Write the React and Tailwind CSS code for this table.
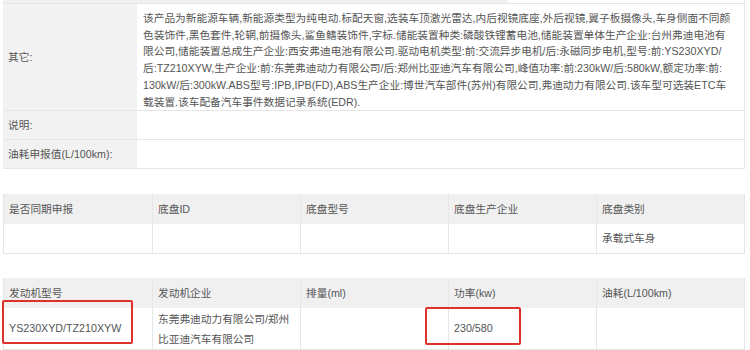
export default function App() {
  const lines = [
    "该产品为新能源车辆,新能源类型为纯电动.标配天窗,选装车顶激光雷达,内后视镜底座,外后视镜,翼子板摄像头,车身侧面不同颜",
    "色装饰件,黑色套件,轮辋,前摄像头,鲨鱼鳍装饰件,字标.储能装置种类:磷酸铁锂蓄电池,储能装置单体生产企业:台州弗迪电池有",
    "限公司,储能装置总成生产企业:西安弗迪电池有限公司.驱动电机类型:前:交流异步电机/后:永磁同步电机,型号:前:YS230XYD/",
    "后:TZ210XYW,生产企业:前:东莞弗迪动力有限公司/后:郑州比亚迪汽车有限公司,峰值功率:前:230kW/后:580kW,额定功率:前:",
    "130kW/后:300kW.ABS型号:IPB,IPB(FD),ABS生产企业:博世汽车部件(苏州)有限公司,弗迪动力有限公司.该车型可选装ETC车",
    "载装置.该车配备汽车事件数据记录系统(EDR).",
  ];
  const cell = "border-l border-[#e6e6e6] first:border-l-0 pl-[5px] flex items-center";
  return (
    <div className="w-[750px] h-[350px] bg-white relative overflow-hidden pl-[3px] text-[10.7px] text-[#555] font-['Liberation_Sans','Noto_Sans_CJK_SC',sans-serif]">
      {/* Table 1 */}
      <div className="w-[742px] border-r border-b border-[#e6e6e6]">
        <div className="flex h-[3px]">
          <div className="w-[134px] bg-[#f0f0f0]" />
          <div className="w-[371px] bg-[#f0f0f0]" />
        </div>
        <div className="flex h-[107px] border-t border-[#e6e6e6]">
          <div className="w-[134px] shrink-0 bg-[#f2f2f2] flex items-center pl-[5px]">其它:</div>
          <div className="flex-1 pl-[6px] pt-[6px] leading-[16.7px]">
            {lines.map((l, i) => (
              <div key={i} className="whitespace-nowrap">{l}</div>
            ))}
          </div>
        </div>
        <div className="flex h-[29px] border-t border-[#e6e6e6]">
          <div className="w-[134px] shrink-0 bg-[#f2f2f2] flex items-center pl-[5px]">说明:</div>
          <div className="flex-1" />
        </div>
        <div className="flex h-[29px] border-t border-[#e6e6e6]">
          <div className="w-[134px] shrink-0 bg-[#f2f2f2] flex items-center pl-[5px]">油耗申报值(L/100km):</div>
          <div className="flex-1" />
        </div>
      </div>

      {/* Table 2 */}
      <div className="mt-[25px] w-[742px] border border-t-0 border-[#e6e6e6]">
        <div className="grid grid-cols-5 h-[30px] bg-[#f0f0f0]">
          <div className={cell}>是否同期申报</div>
          <div className={cell}>底盘ID</div>
          <div className={cell}>底盘型号</div>
          <div className={cell}>底盘生产企业</div>
          <div className={cell}>底盘类别</div>
        </div>
        <div className="grid grid-cols-5 h-[29px]">
          <div className={cell}></div>
          <div className={cell}></div>
          <div className={cell}></div>
          <div className={cell}></div>
          <div className={cell}>承载式车身</div>
        </div>
      </div>

      {/* Table 3 */}
      <div className="mt-[24px] w-[742px] border border-t-0 border-[#e6e6e6]">
        <div className="grid grid-cols-5 h-[30px] bg-[#f0f0f0]">
          <div className={cell}>发动机型号</div>
          <div className={cell}>发动机企业</div>
          <div className={cell}>排量(ml)</div>
          <div className={cell}>功率(kw)</div>
          <div className={cell}>油耗(L/100km)</div>
        </div>
        <div className="grid grid-cols-5 h-[41px]">
          <div className={cell}>YS230XYD/TZ210XYW</div>
          <div className={cell + " leading-[20px]"}>东莞弗迪动力有限公司/郑州<br />比亚迪汽车有限公司</div>
          <div className={cell}></div>
          <div className={cell}>230/580</div>
          <div className={cell}></div>
        </div>
      </div>

      {/* red highlight boxes */}
      <div className="absolute left-[2px] top-[300px] w-[131px] h-[44px] border-2 border-[#e0302e] rounded-[2px]" />
      <div className="absolute left-[425px] top-[307px] w-[96px] h-[38px] border-2 border-[#e0302e] rounded-[2px]" />
    </div>
  );
}
